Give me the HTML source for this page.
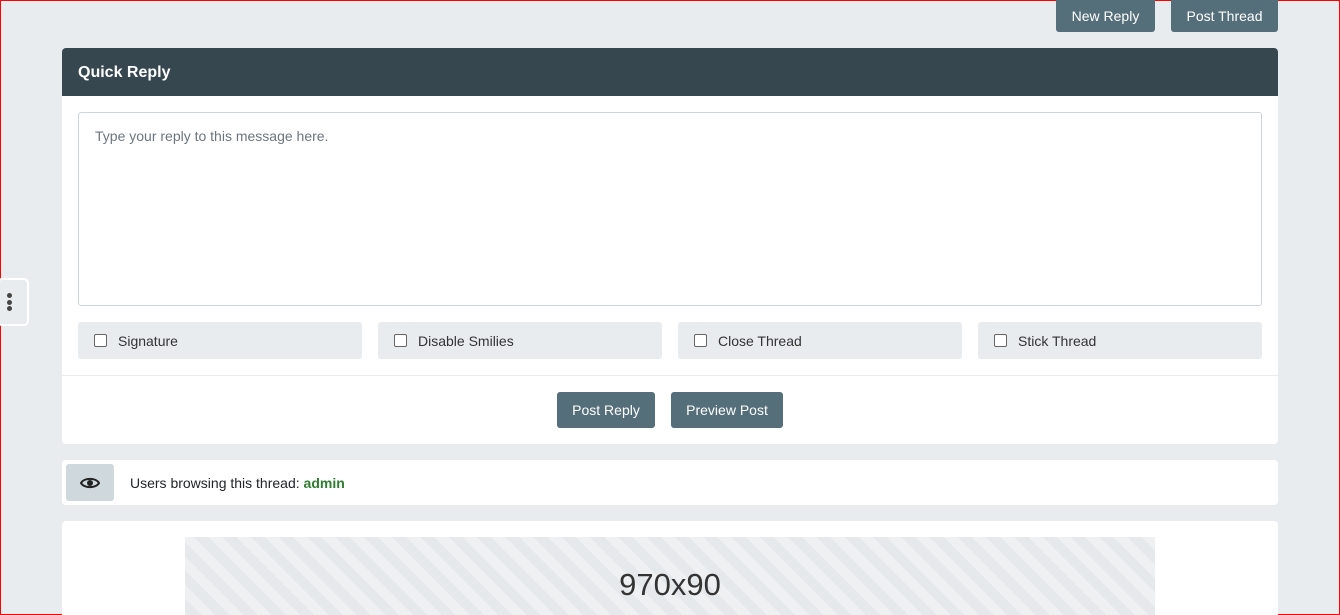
<!DOCTYPE html>
<html><head><style>
*{box-sizing:border-box;margin:0;padding:0}
html,body{width:1340px;height:615px;overflow:hidden}
body{background:#e9ecef;font-family:"Liberation Sans",sans-serif;font-size:14px;color:#212529;position:relative;border:1px solid #f00}
.btn{position:absolute;background:#546e7a;color:#fff;border-radius:3px;font-size:14px;text-align:center}
.panel{position:absolute;left:61px;width:1216px;background:#fff;border-radius:4px}
.head{height:48px;background:#37474f;color:#fff;font-weight:bold;font-size:16px;padding:16px 16px;border-radius:4px 4px 0 0}
.ta{position:absolute;left:16px;top:64px;width:1184px;height:194px;border:1px solid #ced4da;border-radius:3px;color:#6c757d;padding:15px 16px;font-size:14px}
.cb{position:absolute;top:274px;width:284px;height:37px;background:#e9ecef;border-radius:3px;padding:11px 16px;font-size:14px;color:#333}
.cb i{display:inline-block;width:13px;height:13px;border:1px solid #666;border-radius:2px;background:#fff;vertical-align:-1px;margin-right:11px}
</style></head><body>
<div class="btn" style="left:1055px;top:-1px;width:99px;height:32px;line-height:32px;border-radius:0 0 3px 3px">New Reply</div>
<div class="btn" style="left:1170px;top:-1px;width:107px;height:32px;line-height:32px;border-radius:0 0 3px 3px">Post Thread</div>
<div style="position:absolute;left:-4px;top:277px;width:32px;height:48px;border:2px solid #fff;border-radius:5px;background:#e9ecef"><div style="position:absolute;left:8px;top:13px;width:5px;line-height:0">
<span style="display:block;width:5px;height:5px;border-radius:50%;background:#444;margin-bottom:1.5px"></span><span style="display:block;width:5px;height:5px;border-radius:50%;background:#444;margin-bottom:1.5px"></span><span style="display:block;width:5px;height:5px;border-radius:50%;background:#444"></span></div></div>
<div class="panel" style="top:47px;height:396px">
<div class="head">Quick Reply</div>
<div class="ta">Type your reply to this message here.</div>
<div class="cb" style="left:16px"><i></i>Signature</div>
<div class="cb" style="left:316px"><i></i>Disable Smilies</div>
<div class="cb" style="left:616px"><i></i>Close Thread</div>
<div class="cb" style="left:916px"><i></i>Stick Thread</div>
<div style="position:absolute;left:0;top:327px;width:100%;height:1px;background:#e9ecef"></div>
<div class="btn" style="left:495px;top:344px;width:98px;height:36px;line-height:36px">Post Reply</div>
<div class="btn" style="left:609px;top:344px;width:112px;height:36px;line-height:36px">Preview Post</div>
</div>
<div class="panel" style="top:459px;height:45px">
<div style="position:absolute;left:4px;top:4px;width:48px;height:37px;background:#cfd8dc;border-radius:3px">
<svg width="20" height="14" viewBox="0 0 20 14" style="position:absolute;left:14px;top:12px"><path d="M1 7C4 1.5 16 1.5 19 7C16 12.5 4 12.5 1 7Z" fill="none" stroke="#222" stroke-width="2"/><circle cx="10" cy="7" r="3" fill="#222"/></svg></div>
<div style="position:absolute;left:68px;top:15px;font-size:14px">Users browsing this thread: <b style="color:#2e7d32">admin</b></div>
</div>
<div class="panel" style="top:520px;height:110px">
<div style="position:absolute;left:123px;top:16px;width:970px;height:90px;background:repeating-linear-gradient(45deg,#eef0f2 0 10px,#e6e9ec 10px 20px);text-align:center;font-size:31px;color:#333;padding-top:30px">970x90</div>
</div>
</body></html>
